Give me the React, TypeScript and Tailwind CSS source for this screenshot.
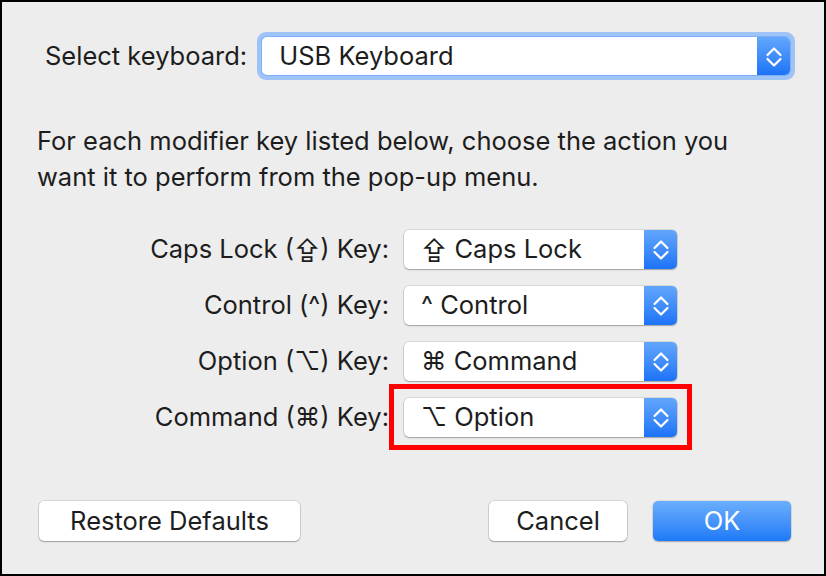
import React from 'react';

const font = "font-['Inter','DejaVu_Sans',sans-serif]";

function Chevrons() {
  return (
    <svg width="32" height="39" viewBox="0 0 32 39" fill="none">
      <path d="M9.5 18 L16 11.5 L22.5 18" stroke="white" strokeWidth="2.2" strokeLinecap="round" strokeLinejoin="round" />
      <path d="M9.5 22 L16 28.5 L22.5 22" stroke="white" strokeWidth="2.2" strokeLinecap="round" strokeLinejoin="round" />
    </svg>
  );
}

function PopUp({ label }: { label: string }) {
  return (
    <div className="flex h-[39px] w-[273px] overflow-hidden rounded-[5px] bg-white shadow-[0_0_0_0.5px_rgba(0,0,0,0.18),0_1px_1.5px_rgba(0,0,0,0.25)]">
      <div className="flex flex-1 items-center pl-[17px] text-[25.5px] text-[#1d1d1d]">{label}</div>
      <div className="flex w-[33px] items-center justify-center bg-gradient-to-b from-[#62a6fc] to-[#1b73f6]">
        <Chevrons />
      </div>
    </div>
  );
}

function Button({ children, primary, width }: { children: React.ReactNode; primary?: boolean; width: string }) {
  return (
    <button
      className={
        primary
          ? `${width} h-[40px] rounded-[5px] bg-gradient-to-b from-[#6aaefc] to-[#1c7af6] text-[25.5px] text-white shadow-[0_0_0_0.5px_rgba(0,0,0,0.12),0_1px_1.5px_rgba(0,0,0,0.25)]`
          : `${width} h-[40px] rounded-[5px] bg-white text-[25.5px] text-[#1d1d1d] shadow-[0_0_0_0.5px_rgba(0,0,0,0.2),0_1px_1.5px_rgba(0,0,0,0.25)]`
      }
    >
      {children}
    </button>
  );
}

const rows = [
  { key: 'Caps Lock (⇪) Key:', value: '⇪ Caps Lock' },
  { key: 'Control (^) Key:', value: '^ Control' },
  { key: 'Option (⌥) Key:', value: '⌘ Command' },
  { key: 'Command (⌘) Key:', value: '⌥ Option', highlight: true },
];

export default function App() {
  return (
    <div className={`${font} h-[576px] w-[826px] border-2 border-black bg-[#ededed] text-[#1d1d1d]`}>
      <div className="mt-[30px] flex items-center pl-[43px]">
        <span className="text-[25.5px]">Select keyboard:</span>
        <div className="ml-[10px] rounded-[9px] bg-[#9ec3f7] p-[5px]">
          <div className="flex h-[38px] w-[528px] overflow-hidden rounded-[5px] bg-white shadow-[0_0_0_1px_#7fb0f5]">
            <div className="flex flex-1 items-center pl-[17px] text-[25.5px]">USB Keyboard</div>
            <div className="flex w-[33px] items-center justify-center bg-gradient-to-b from-[#62a6fc] to-[#1b73f6]">
              <Chevrons />
            </div>
          </div>
        </div>
      </div>

      <p className="mt-[43px] pl-[35px] text-[25.5px] leading-[36px]">
        For each modifier key listed below, choose the action you
        <br />
        want it to perform from the pop-up menu.
      </p>

      <div className="mt-[35px] grid grid-cols-[387px_273px] gap-x-[15px] gap-y-[17px]">
        {rows.map((r) => (
          <React.Fragment key={r.key}>
            <div className="flex h-[39px] items-center justify-end text-[25.5px]">{r.key}</div>
            <div className="relative">
              <PopUp label={r.value} />
              {r.highlight && (
                <div className="absolute -left-[15px] -right-[15px] -top-[14px] -bottom-[13px] border-[5px] border-[#ff0000]" />
              )}
            </div>
          </React.Fragment>
        ))}
      </div>

      <div className="mt-[64px] flex items-center pl-[37px] pr-[33px]">
        <Button width="w-[261px]">Restore Defaults</Button>
        <div className="flex-1" />
        <Button width="w-[138px]">Cancel</Button>
        <div className="w-[26px]" />
        <Button width="w-[138px]" primary>
          OK
        </Button>
      </div>
    </div>
  );
}
